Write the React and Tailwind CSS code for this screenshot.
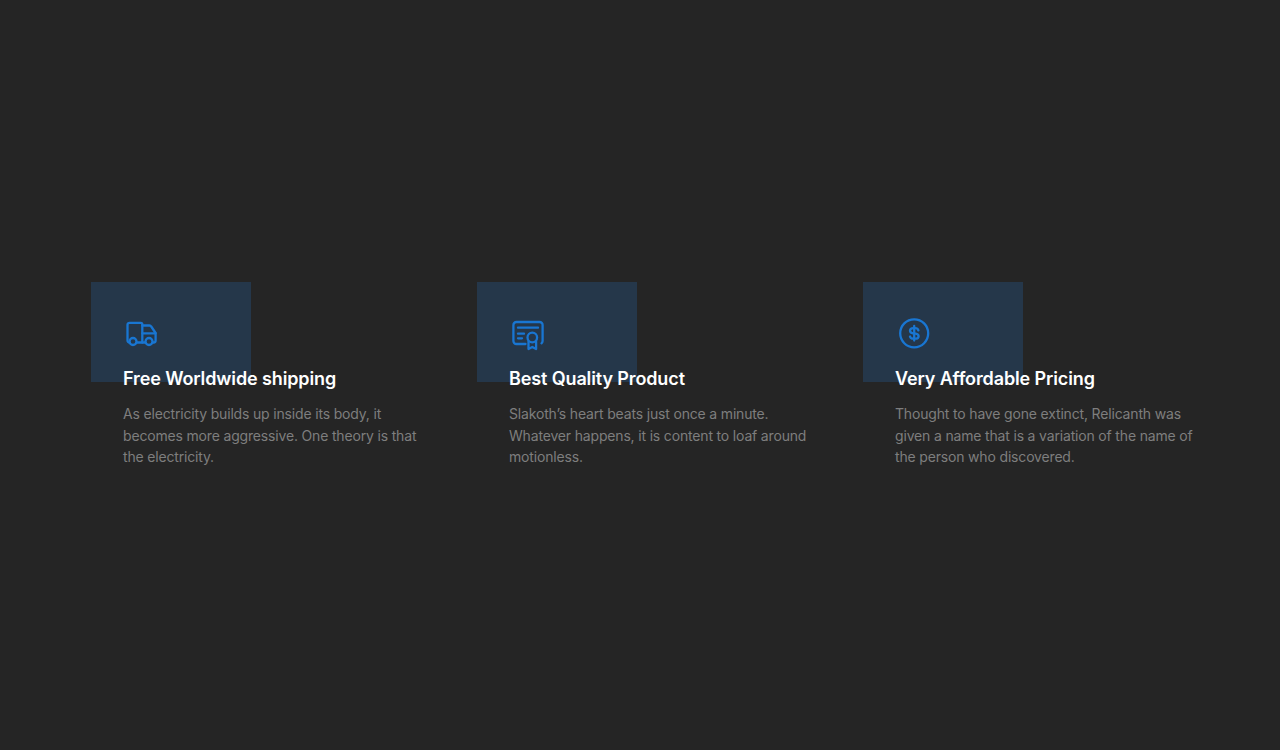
const items = [
  {
    title: "Free Worldwide shipping",
    text: "As electricity builds up inside its body, it becomes more aggressive. One theory is that the electricity.",
    icon: (
      <svg width="34" height="34" viewBox="0 0 34 34" fill="none" stroke="#1976d2" strokeWidth="2.3" strokeLinecap="round" strokeLinejoin="round">
        <path d="M3.5 24.5H3.5A2 2 0 0 1 1.5 22.5V6.8A2 2 0 0 1 3.5 4.8H14.8A1.5 1.5 0 0 1 16.3 6.3V24.5H11" />
        <path d="M16.3 7.5H23.5A2 2 0 0 1 25.2 8.5L29.6 15V22.5A2 2 0 0 1 27.6 24.5H27" />
        <path d="M16.3 15.3H29.6" />
        <path d="M19 24.5H16.3" />
        <circle cx="7" cy="23.5" r="3.5" />
        <circle cx="23" cy="23.5" r="3.5" />
      </svg>
    ),
  },
  {
    title: "Best Quality Product",
    text: "Slakoth’s heart beats just once a minute. Whatever happens, it is content to loaf around motionless.",
    icon: (
      <svg width="34" height="34" viewBox="0 0 34 34" fill="none" stroke="#1976d2" strokeWidth="2.3" strokeLinecap="round" strokeLinejoin="round">
        <path d="M13.5 26H4.4A3 3 0 0 1 1.4 23V7A3 3 0 0 1 4.4 4H27.6A3 3 0 0 1 30.6 7V23A3 3 0 0 1 29.5 25.3" />
        <path d="M6 9.7H26" />
        <path d="M6 15.7H12" />
        <path d="M6 20.3H10" />
        <circle cx="20.3" cy="19.5" r="4.8" />
        <path d="M16.5 23.5V31L20.3 29L24.1 31V23.5" />
      </svg>
    ),
  },
  {
    title: "Very Affordable Pricing",
    text: "Thought to have gone extinct, Relicanth was given a name that is a variation of the name of the person who discovered.",
    icon: (
      <svg width="34" height="34" viewBox="0 0 34 34" fill="none" stroke="#1976d2" strokeWidth="2.3" strokeLinecap="round" strokeLinejoin="round">
        <circle cx="16.2" cy="15.3" r="14" />
        <path d="M20.4 12.4C20 11 18.8 10.1 17.2 10.1H15.4C13.4 10.1 12 11.3 12 12.8C12 14.3 13.2 15 15 15.3L17.6 15.7C19.4 16 20.6 16.9 20.6 18.2C20.6 19.6 19.2 20.7 17.2 20.7H15.4C13.6 20.7 12.3 19.9 12 18.5" />
        <path d="M16.2 8V22.6" />
      </svg>
    ),
  },
];

export default function App() {
  return (
    <div className="min-h-screen bg-[#252525] flex items-center font-['Inter',sans-serif]">
      <div className="grid grid-cols-3 w-full pl-[91px] pr-[31px]">
        {items.map((item) => (
          <div key={item.title} className="relative pl-8 pr-12">
            <div className="absolute left-0 top-0 w-40 h-[100px] bg-[#25374a]" />
            <div className="relative pt-[36px]">
              <div className="h-[34px] w-[34px] ml-[3px]">{item.icon}</div>
              <h3 className="mt-[13px] text-lg leading-7 font-semibold tracking-[-0.12px] text-white">{item.title}</h3>
              <p className="mt-[10px] text-[14px] leading-[21.6px] tracking-[-0.17px] text-[#7e7e7e]">{item.text}</p>
            </div>
          </div>
        ))}
      </div>
    </div>
  );
}
